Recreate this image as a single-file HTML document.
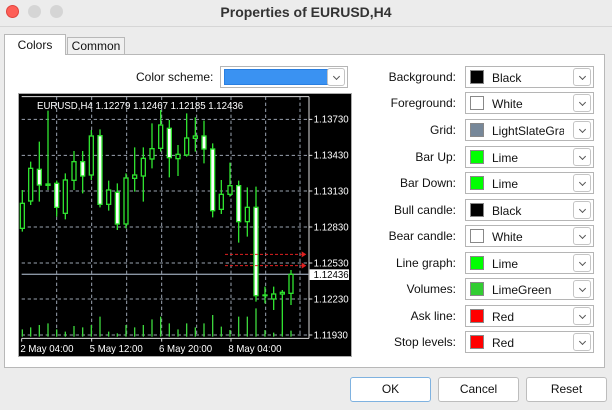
<!DOCTYPE html>
<html><head><meta charset="utf-8"><style>
*{box-sizing:border-box;margin:0;padding:0}
body{width:612px;height:410px;background:#ececec;font-family:"Liberation Sans",sans-serif;font-size:12px;color:#111;position:relative;overflow:hidden}
.tl{position:absolute;top:5px;width:13px;height:13px;border-radius:50%}
.title{position:absolute;top:4px;left:0;width:612px;text-align:center;font-weight:bold;font-size:14px;color:#333}
.tbline{position:absolute;top:26px;left:0;width:612px;height:1px;background:#d6d6d6}
.panel{position:absolute;left:4px;top:54px;width:601px;height:314px;background:#fff;border:1px solid #b8b8b8}
.tab{position:absolute;font-size:12px;text-align:center;border:1px solid #b8b8b8;border-bottom:none}
.lbl{position:absolute;left:370px;width:86px;text-align:right;font-size:12px}
.cb{position:absolute;left:465px;width:129px;height:22px;border:1px solid #b5b5b5;background:#fff}
.cb .sw{position:absolute;left:4px;top:3px;width:14px;height:14px;border:1px solid #888}
.cb .t{position:absolute;left:26px;top:4px;font-size:12px;white-space:nowrap;overflow:hidden;width:72px}
.dd{position:absolute;right:2px;top:1px;width:18px;height:18px;border:1px solid #c4c4c4;border-radius:3px;background:#fff}
.dd:after{content:"";position:absolute;left:6px;top:5px;width:4px;height:4px;border-right:1px solid #555;border-bottom:1px solid #555;transform:rotate(45deg)}
.btn{position:absolute;top:377px;width:81px;height:25px;border:1px solid #bdbdbd;border-radius:3px;background:#fff;text-align:center;line-height:23px;font-size:12px}
</style></head><body>
<div class="tl" style="left:6px;background:#fe5f57;border:1px solid #e0443e"></div>
<div class="tl" style="left:28px;background:#d5d5d5"></div>
<div class="tl" style="left:50px;background:#d5d5d5"></div>
<div class="title">Properties of EURUSD,H4</div>
<div class="tbline"></div>
<div class="panel"></div>
<div class="tab" style="left:4px;top:34px;width:62px;height:21px;background:#fff;line-height:20px">Colors</div>
<div class="tab" style="left:67px;top:37px;width:58px;height:17px;background:#f0f0f0;line-height:16px">Common</div>
<div style="position:absolute;left:136px;top:70px;font-size:12px">Color scheme:</div>
<div class="cb" style="left:220px;top:66px;width:128px"><div style="position:absolute;left:3px;top:2px;width:105px;height:16px;background:#3a92f2;border:1px solid #2a7fe0"></div><div class="dd"></div></div>

<div style="position:absolute;left:18px;top:93px;width:334px;height:264px;background:#000;border:1px solid #aaa"></div>
<svg style="position:absolute;left:15px;top:90px" width="340" height="270" viewBox="0 0 1020 810">
<g stroke="#9aa3b0" stroke-width="3" stroke-dasharray="10,8" fill="none">
<path d="M20 88H880M20 196H880M20 303H880M20 411H880M20 519H880M20 627H880M20 735H880"/>
<path d="M125 20V740M230 20V740M335 20V740M440 20V740M545 20V740M648 20V740M752 20V740M855 20V740"/>
</g>
<path d="M20 553H880" stroke="#8a95a3" stroke-width="4"/>
<path d="M882 20V745M20 20H882M20 745H882" stroke="#ddd" stroke-width="3" fill="none"/>
<g stroke="#ddd" stroke-width="3"><path d="M882 88h10M882 196h10M882 303h10M882 411h10M882 519h10M882 627h10M882 735h10M230 745v10M440 745v10M648 745v10M20 745v10"/></g>
<g stroke="#3cd43c" stroke-width="4">
<path d="M22 740V718M47 740V712M73 740V705M99 740V700M125 740V718M151 740V725M177 740V708M203 740V712M229 740V705M255 740V680M281 740V725M307 740V730M333 740V705M359 740V712M385 740V705M411 740V688M437 740V680M463 740V700M489 740V718M515 740V700M541 740V712M567 740V700M593 740V675M619 740V710M645 740V720M671 740V680M697 740V680M723 740V655M750 740V720M776 740V728M802 740V725M828 740V722"/>
</g>
<g stroke="#2fe02f" stroke-width="4" fill="#000">
<path d="M22 300V425M47 215V345M73 155V335M99 62V300M125 272V380M151 250V388M177 183V300M203 183V310M229 120V270M255 118V352M281 272V362M307 280V420M333 250V415M359 172V305M385 172V335M411 100V235M437 60V185M463 90V262M489 165V258M515 70V200M541 82V185M567 92V220M593 160V382M619 270V372M645 218V320M671 272V458M697 292V440M723 290V635M750 590V640M776 590V660M802 600V735M828 540V645"/>
<rect x="16" y="340" width="12" height="75"/><rect x="41" y="235" width="12" height="98"/>
<rect x="93" y="282" width="12" height="4"/><rect x="145" y="270" width="12" height="100"/>
<rect x="171" y="215" width="12" height="56"/><rect x="223" y="138" width="12" height="117"/>
<rect x="275" y="300" width="12" height="43"/><rect x="327" y="264" width="12" height="138"/>
<rect x="353" y="255" width="12" height="10"/><rect x="379" y="205" width="12" height="53"/>
<rect x="405" y="176" width="12" height="31"/><rect x="431" y="105" width="12" height="70"/>
<rect x="483" y="193" width="12" height="13"/><rect x="509" y="144" width="12" height="51"/>
<rect x="535" y="138" width="12" height="7"/><rect x="613" y="313" width="12" height="45"/>
<rect x="639" y="287" width="12" height="26"/><rect x="691" y="352" width="12" height="43"/>
<rect x="744" y="615" width="12" height="2"/><rect x="770" y="612" width="12" height="15"/>
<rect x="796" y="607" width="12" height="5"/><rect x="822" y="553" width="12" height="57"/>
</g>
<g stroke="#2fe02f" stroke-width="4" fill="#fff">
<rect x="67" y="238" width="12" height="47"/><rect x="119" y="280" width="12" height="72"/>
<rect x="197" y="215" width="12" height="43"/><rect x="249" y="137" width="12" height="206"/>
<rect x="301" y="307" width="12" height="95"/><rect x="457" y="115" width="12" height="88"/>
<rect x="561" y="138" width="12" height="39"/><rect x="587" y="177" width="12" height="185"/>
<rect x="665" y="287" width="12" height="108"/><rect x="717" y="352" width="12" height="265"/>
</g>
<g stroke="#e02020" stroke-width="3" stroke-dasharray="9,6"><path d="M630 493H860M630 527H860"/></g>
<g fill="#e02020"><path d="M860 484l14 9-14 9zM860 518l14 9-14 9z"/></g>
<rect x="884" y="538" width="118" height="32" fill="#fff"/>
<g font-family="Liberation Sans" font-size="29" fill="#fff">
<text x="66" y="57">EURUSD,H4  1.12279 1.12467 1.12185 1.12436</text>
<text x="896" y="98">1.13730</text><text x="896" y="206">1.13430</text><text x="896" y="313">1.13130</text><text x="896" y="421">1.12830</text><text x="896" y="529">1.12530</text><text x="896" y="637">1.12230</text><text x="896" y="745">1.11930</text>
<text x="896" y="564" fill="#000">1.12436</text>
<text x="16" y="786">2 May 04:00</text><text x="224" y="786">5 May 12:00</text><text x="432" y="786">6 May 20:00</text><text x="640" y="786">8 May 04:00</text>
</g>
</svg>

<div class="lbl" style="top:70px">Background:</div><div class="cb" style="top:66px"><div class="sw" style="background:#000"></div><div class="t">Black</div><div class="dd"></div></div>
<div class="lbl" style="top:96px">Foreground:</div><div class="cb" style="top:92px"><div class="sw" style="background:#fff"></div><div class="t">White</div><div class="dd"></div></div>
<div class="lbl" style="top:123px">Grid:</div><div class="cb" style="top:119px"><div class="sw" style="background:#778899"></div><div class="t">LightSlateGray</div><div class="dd"></div></div>
<div class="lbl" style="top:150px">Bar Up:</div><div class="cb" style="top:146px"><div class="sw" style="background:#0f0"></div><div class="t">Lime</div><div class="dd"></div></div>
<div class="lbl" style="top:176px">Bar Down:</div><div class="cb" style="top:172px"><div class="sw" style="background:#0f0"></div><div class="t">Lime</div><div class="dd"></div></div>
<div class="lbl" style="top:203px">Bull candle:</div><div class="cb" style="top:199px"><div class="sw" style="background:#000"></div><div class="t">Black</div><div class="dd"></div></div>
<div class="lbl" style="top:229px">Bear candle:</div><div class="cb" style="top:225px"><div class="sw" style="background:#fff"></div><div class="t">White</div><div class="dd"></div></div>
<div class="lbl" style="top:256px">Line graph:</div><div class="cb" style="top:252px"><div class="sw" style="background:#0f0"></div><div class="t">Lime</div><div class="dd"></div></div>
<div class="lbl" style="top:282px">Volumes:</div><div class="cb" style="top:278px"><div class="sw" style="background:#32cd32"></div><div class="t">LimeGreen</div><div class="dd"></div></div>
<div class="lbl" style="top:309px">Ask line:</div><div class="cb" style="top:305px"><div class="sw" style="background:#f00"></div><div class="t">Red</div><div class="dd"></div></div>
<div class="lbl" style="top:335px">Stop levels:</div><div class="cb" style="top:331px"><div class="sw" style="background:#f00"></div><div class="t">Red</div><div class="dd"></div></div>

<div class="btn" style="left:350px;border-color:#7fb2e0">OK</div>
<div class="btn" style="left:438px">Cancel</div>
<div class="btn" style="left:526px">Reset</div>
</body></html>
